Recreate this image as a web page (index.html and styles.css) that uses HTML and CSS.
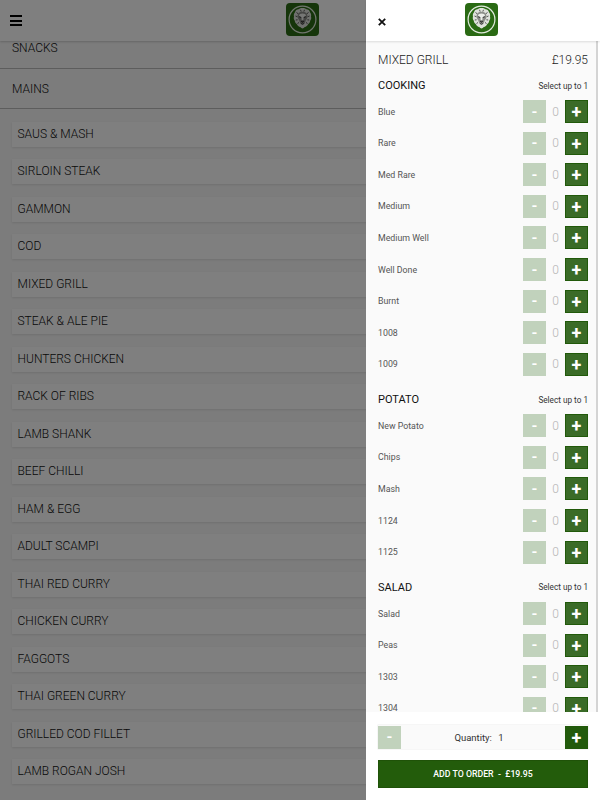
FILE: index.html
```html
<!DOCTYPE html>
<html lang="en">
<head>
<meta charset="utf-8">
<title>Mixed Grill</title>
<link rel="stylesheet" href="styles.css">
</head>
<body>
<svg class="defs" width="0" height="0" aria-hidden="true">
  <symbol id="logo" viewBox="0 0 33 33">
    <rect width="33" height="33" rx="4" fill="#2a6a14"/>
    <circle cx="16.5" cy="16.5" r="13.4" fill="none" stroke="#e4ece0" stroke-width="1.2"/>
    <path d="M16.5 5c-1.800 0-2.900.5-4 1.300-1.700.1-3.100 1.200-3.500 2.900-1.100 1.200-1.400 2.800-1 4.300-.5 1.500-.2 3.100.8 4.300.1 1.500.9 2.700 2.100 3.500.6 1.500 1.900 2.500 3.300 2.800.7.800 1.500 1.300 2.300 1.300s1.600-.5 2.300-1.300c1.400-.3 2.700-1.300 3.300-2.800 1.200-.8 2-2 2.100-3.500 1-1.200 1.300-2.800.8-4.300.4-1.500.1-3.100-1-4.300-.4-1.700-1.800-2.800-3.500-2.900-1.100-.8-2.200-1.300-4-1.300z" fill="#dfe2dc"/>
    <path d="M10.500 9.500l2 1.500M9.500 13l2 .8M9.800 17l1.800-.2M11.500 20.500l1.500-1M22.500 9.500l-2 1.500M23.500 13l-2 .8M23.200 17l-1.800-.2M21.500 20.500l-1.500-1M14.500 6.800l.7 1.800M18.500 6.800l-.7 1.800" stroke="#555" stroke-width="1" fill="none"/>
    <path d="M16.500 8.800c-2.800 0-5 1.500-5 4.200 0 1.800.8 3.100 1.700 4.300.5 1.700 1.500 4.200 3.300 4.200s2.800-2.500 3.300-4.200c.9-1.200 1.700-2.500 1.700-4.300 0-2.700-2.200-4.200-5-4.200z" fill="#8b8d88"/>
    <path d="M16.500 10.500c-1.900 0-3.500.8-3.500 2.300l2.400 1.500.3 3h1.600l.3-3L20 12.800c0-1.500-1.600-2.300-3.500-2.300z" fill="#eceeea"/>
    <path d="M13.200 13.800l2 .7M19.800 13.800l-2 .7M15.200 18.300h2.600l-1.300 1.300zM14.700 20.300l1.800 1 1.800-1" stroke="#222" stroke-width=".8" fill="none"/>
  </symbol>
</svg>
<div class="page">
  <header class="topbar">
    <span class="burger"><i></i><i></i><i></i></span>
    <svg class="logo logo-main"><use href="#logo"/></svg>
  </header>
  <section class="cat cat-snacks">SNACKS</section>
  <section class="cat">MAINS</section>
  <ul class="dishes">
    <li>SAUS &amp; MASH</li>
    <li>SIRLOIN STEAK</li>
    <li>GAMMON</li>
    <li>COD</li>
    <li>MIXED GRILL</li>
    <li>STEAK &amp; ALE PIE</li>
    <li>HUNTERS CHICKEN</li>
    <li>RACK OF RIBS</li>
    <li>LAMB SHANK</li>
    <li>BEEF CHILLI</li>
    <li>HAM &amp; EGG</li>
    <li>ADULT SCAMPI</li>
    <li>THAI RED CURRY</li>
    <li>CHICKEN CURRY</li>
    <li>FAGGOTS</li>
    <li>THAI GREEN CURRY</li>
    <li>GRILLED COD FILLET</li>
    <li>LAMB ROGAN JOSH</li>
  </ul>
</div>
<div class="scrim"></div>
<aside class="drawer">
  <header class="drawer-head">
    <svg class="close" viewBox="0 0 8 8"><path d="M.8.8l6.400 6.400M7.200.8L.8 7.200" stroke="#111" stroke-width="1.800" fill="none"/></svg>
    <svg class="logo logo-drawer"><use href="#logo"/></svg>
  </header>
  <div class="scroller">
    <div class="title-row"><span>MIXED GRILL</span><span>£19.95</span></div>

    <div class="group-head"><h3>COOKING</h3><small>Select up to 1</small></div>
    <div class="opt"><span class="name">Blue</span><b class="minus">-</b><span class="count">0</span><b class="plus">+</b></div>
    <div class="opt"><span class="name">Rare</span><b class="minus">-</b><span class="count">0</span><b class="plus">+</b></div>
    <div class="opt"><span class="name">Med Rare</span><b class="minus">-</b><span class="count">0</span><b class="plus">+</b></div>
    <div class="opt"><span class="name">Medium</span><b class="minus">-</b><span class="count">0</span><b class="plus">+</b></div>
    <div class="opt"><span class="name">Medium Well</span><b class="minus">-</b><span class="count">0</span><b class="plus">+</b></div>
    <div class="opt"><span class="name">Well Done</span><b class="minus">-</b><span class="count">0</span><b class="plus">+</b></div>
    <div class="opt"><span class="name">Burnt</span><b class="minus">-</b><span class="count">0</span><b class="plus">+</b></div>
    <div class="opt"><span class="name">1008</span><b class="minus">-</b><span class="count">0</span><b class="plus">+</b></div>
    <div class="opt"><span class="name">1009</span><b class="minus">-</b><span class="count">0</span><b class="plus">+</b></div>

    <div class="group-head"><h3>POTATO</h3><small>Select up to 1</small></div>
    <div class="opt"><span class="name">New Potato</span><b class="minus">-</b><span class="count">0</span><b class="plus">+</b></div>
    <div class="opt"><span class="name">Chips</span><b class="minus">-</b><span class="count">0</span><b class="plus">+</b></div>
    <div class="opt"><span class="name">Mash</span><b class="minus">-</b><span class="count">0</span><b class="plus">+</b></div>
    <div class="opt"><span class="name">1124</span><b class="minus">-</b><span class="count">0</span><b class="plus">+</b></div>
    <div class="opt"><span class="name">1125</span><b class="minus">-</b><span class="count">0</span><b class="plus">+</b></div>

    <div class="group-head"><h3>SALAD</h3><small>Select up to 1</small></div>
    <div class="opt"><span class="name">Salad</span><b class="minus">-</b><span class="count">0</span><b class="plus">+</b></div>
    <div class="opt"><span class="name">Peas</span><b class="minus">-</b><span class="count">0</span><b class="plus">+</b></div>
    <div class="opt"><span class="name">1303</span><b class="minus">-</b><span class="count">0</span><b class="plus">+</b></div>
    <div class="opt"><span class="name">1304</span><b class="minus">-</b><span class="count">0</span><b class="plus">+</b></div>
  </div>
  <footer class="foot">
    <div class="qty"><b class="minus">-</b><span class="qty-label">Quantity: <em>1</em></span><b class="plus dark">+</b></div>
    <button class="add">ADD TO ORDER &nbsp;-&nbsp; £19.95</button>
  </footer>
</aside>
</body>
</html>
```
FILE: styles.css
```css
* { box-sizing: border-box; }
html, body { margin: 0; height: 800px; overflow: hidden; }
body { font-family: Roboto, "Liberation Sans", sans-serif; background: #fff; color: #222; position: relative; }
.defs { position: absolute; }
.page { height: 800px; overflow: hidden; background: #f8f8f8; }
.topbar { height: 41px; background: #fff; display: flex; align-items: center; position: relative; padding-left: 10px; box-shadow: 0 1px 2px rgba(0,0,0,.18); z-index: 1; }
.burger { display: flex; flex-direction: column; gap: 2.500px; width: 12px; }
.burger i { display: block; height: 2px; background: #000; }
.logo { width: 33px; height: 33px; display: block; }
.logo-main { position: absolute; left: 286px; top: 3px; }
.cat { height: 40px; padding-top: 13px; padding-left: 12px; font-size: 12px; font-weight: 300; line-height: 15px; border-bottom: 1px solid #bbb; color: #111; }
.cat-snacks { height: 28px; padding-top: 0; line-height: 14px; }
.dishes { list-style: none; margin: 0; padding: 12.500px 0 0 12px; }
.dishes li { height: 25px; margin-bottom: 12.5px; background: #fff; box-shadow: 0 1px 2px rgba(0,0,0,.1); padding-left: 5.500px; font-size: 12px; font-weight: 300; line-height: 25px; color: #111; width: 600px; }
.scrim { position: absolute; inset: 0; background: rgba(0,0,0,.5); z-index: 2; }
.drawer { position: absolute; top: 0; left: 366px; width: 234px; height: 800px; background: #fff; display: flex; flex-direction: column; z-index: 3; }
.drawer-head { height: 41px; flex: none; position: relative; display: flex; align-items: center; padding-left: 12px; box-shadow: 0 1px 2px rgba(0,0,0,.12); z-index: 1; background: #fff; }
.close { width: 8px; height: 8px; display: block; margin-top: 2px; }
.logo-drawer { position: absolute; left: 99px; top: 3px; }
.scroller { flex: 1; min-height: 0; overflow: hidden; background: #fafafa; padding: 0 8px 0 12px; border-right: 2px solid #d4d4d4; margin-right: 2px; }
.title-row { display: flex; justify-content: space-between; align-items: center; height: 37px; padding-top: 1px; font-size: 12px; font-weight: 300; color: #222; }
.group-head { display: flex; justify-content: space-between; align-items: center; height: 15px; margin-bottom: 2.800px; }
.group-head h3 { margin: 0; font-size: 11px; font-weight: 400; color: #111; }
.group-head small { font-size: 8.200px; color: #333; }
.opt { display: flex; align-items: center; height: 31.6px; font-size: 8.800px; color: #555; }
.opt + .group-head { margin-top: 12px; }
.name { flex: 1; }
.minus, .plus { width: 23px; height: 23px; display: flex; align-items: center; justify-content: center; font-size: 18px; font-weight: 700; color: #fff; flex: none; }
.minus { background: #c1d2bc; font-size: 15px; }
.plus { background: #3a6b27; border: 1px solid #21590a; }
.plus.dark { background: #225a0c; }
.count { width: 19px; text-align: center; font-size: 12px; font-weight: 300; color: #b5b5b5; }
.foot { flex: none; height: 88px; background: #fff; padding: 13px 12px 0; }
.qty { display: flex; align-items: center; height: 24px; background: #fafafa; box-shadow: 0 0 0 .5px #eee; }
.qty-label { flex: 1; text-align: center; font-size: 9.500px; color: #333; padding-right: 8px; }
.qty-label em { font-style: normal; margin-left: 4px; }
.add { display: block; width: 100%; height: 28px; margin-top: 11px; border: 1px solid #1f5208; background: #235c0b; color: #fff; font-family: inherit; font-size: 8.750px; font-weight: 500; padding: 0; }
```
